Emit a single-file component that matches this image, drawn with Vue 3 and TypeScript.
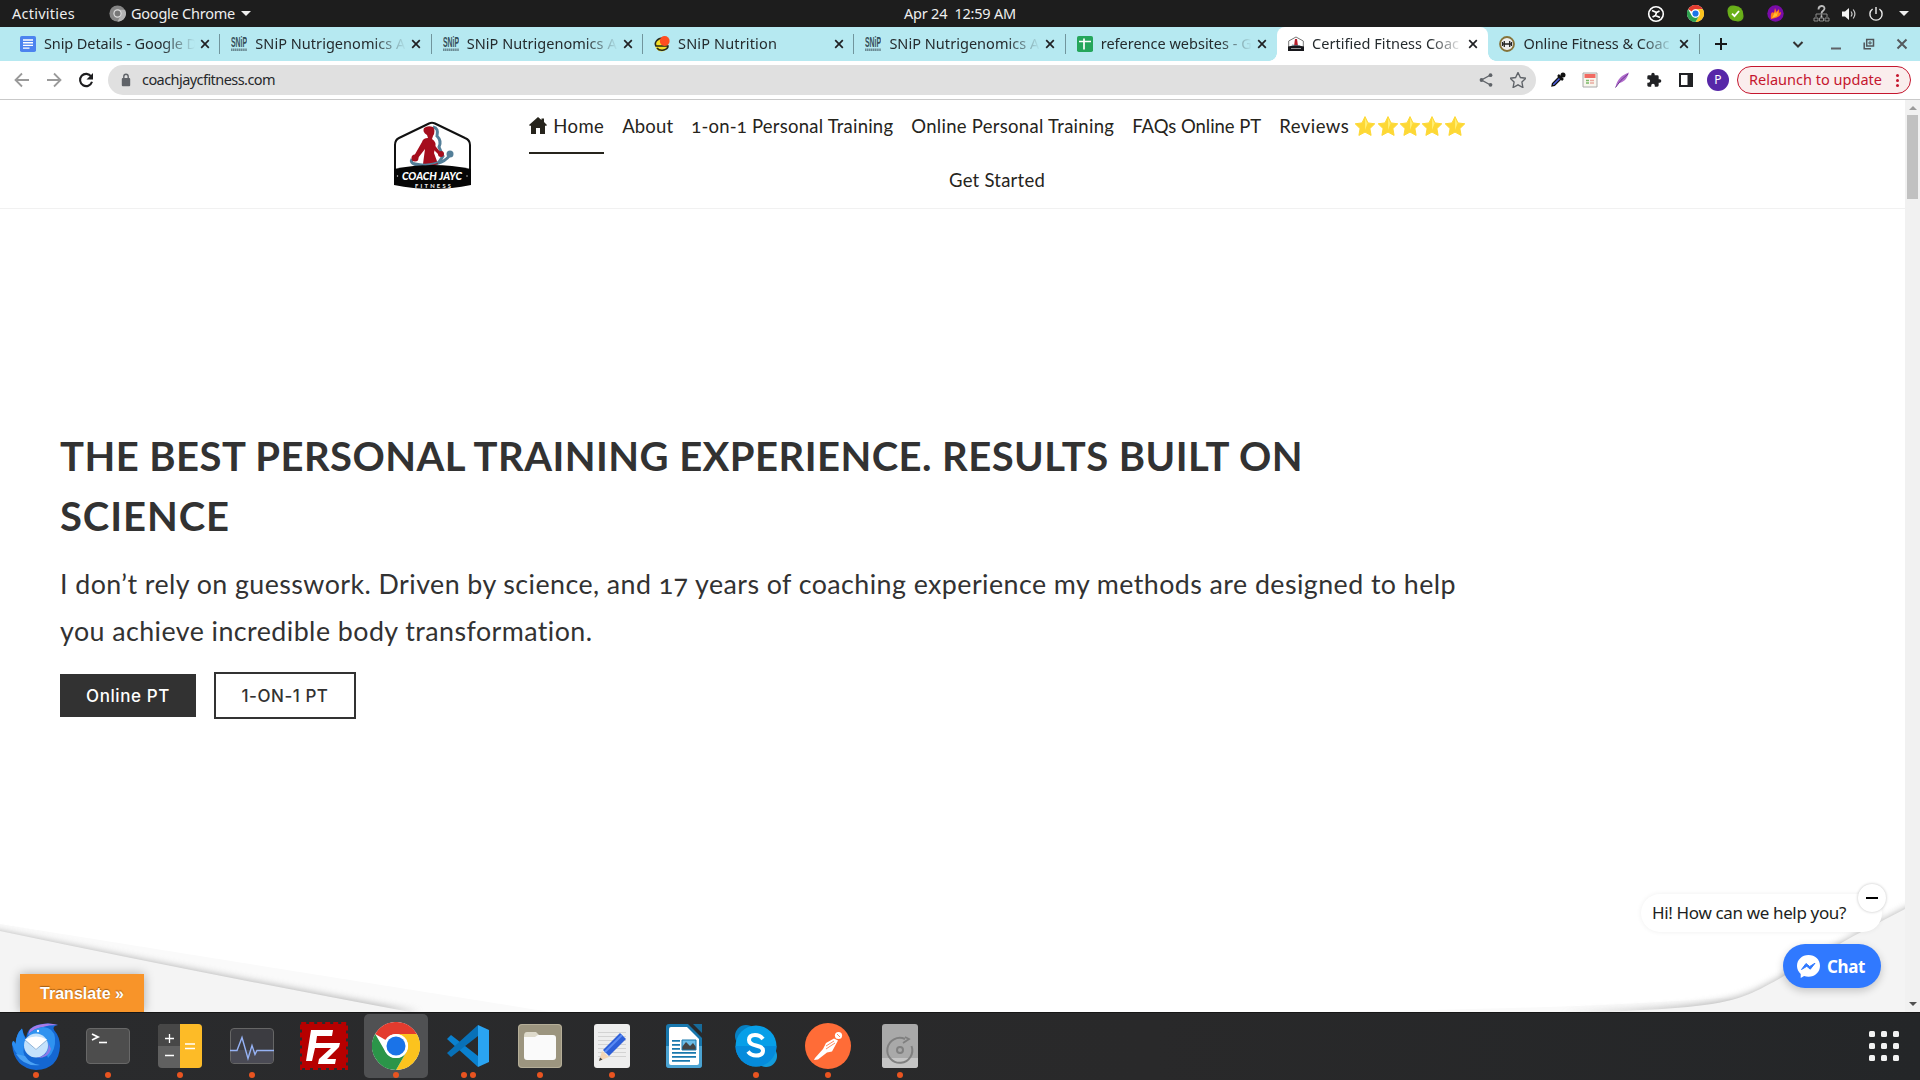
<script setup lang="ts">
interface Tab { title: string; icon: string; width: number; active?: boolean; sep?: boolean }
interface DockApp { id: string; dots: number; active?: boolean }

const tabs: Tab[] = [
  { title: 'Snip Details - Google D', icon: 'docs', width: 153, sep: true },
  { title: 'SNiP Nutrigenomics A', icon: 'snip', width: 150, sep: true },
  { title: 'SNiP Nutrigenomics A', icon: 'snip', width: 150, sep: true },
  { title: 'SNiP Nutrition', icon: 'nutrition', width: 99, sep: true },
  { title: 'SNiP Nutrigenomics A', icon: 'snip', width: 150, sep: true },
  { title: 'reference websites - G', icon: 'sheets', width: 151 },
  { title: 'Certified Fitness Coac', icon: 'coach', width: 147, active: true },
  { title: 'Online Fitness & Coac', icon: 'bell', width: 146, sep: true },
]

const apps: DockApp[] = [
  { id: 'mail', dots: 1 }, { id: 'terminal', dots: 1 }, { id: 'calc', dots: 1 },
  { id: 'monitor', dots: 1 }, { id: 'filezilla', dots: 0 }, { id: 'chrome', dots: 1, active: true },
  { id: 'vscode', dots: 2 }, { id: 'files', dots: 1 }, { id: 'editor', dots: 1 },
  { id: 'writer', dots: 0 }, { id: 'skype', dots: 1 }, { id: 'postman', dots: 1 }, { id: 'disk', dots: 1 },
]

const starPoints = '10,0.6 13,6.9 19.8,7.8 14.9,12.6 16.1,19.4 10,16.1 3.9,19.4 5.1,12.6 0.2,7.8 7,6.9'

// Spreads a line of text over the given width in pixels.
const vFit = {
  mounted(el: HTMLElement, binding: { value: number }) {
    const range = document.createRange()
    range.selectNodeContents(el)
    const natural = range.getBoundingClientRect().width
    const count = (el.textContent ?? '').length
    el.style.letterSpacing = `${(binding.value - natural) / count}px`
  },
}
</script>

<template>
  <div class="desktop">
    <header class="topbar">
      <div class="top-left">
        <span v-fit="63" class="activities">Activities</span>
        <svg width="17" height="17" viewBox="0 0 18 18"><circle cx="9" cy="9" r="8.6" fill="#858585" /><path d="M9 5H17A8.6 8.6 0 0 1 9 17.6L12.500 11" fill="#b5b5b5" /><circle cx="9" cy="9" r="4.4" fill="#ddd" /><circle cx="9" cy="9" r="3.1" fill="#777" /></svg>
        <span v-fit="104" class="app-name">Google Chrome</span>
        <i class="caret"></i>
      </div>
      <div class="clock"><span v-fit="112">Apr 24&nbsp; 12:59 AM</span></div>
      <div class="tray">
        <svg class="t1" width="18" height="18" viewBox="0 0 18 18" fill="none" stroke="#fff"><circle cx="9" cy="9" r="7.300" stroke-width="1.600" /><path d="M5 5.500L9.500 7.500 8.500 10.500 13 12.500M9.500 7.500L12.500 6M8.500 10.500L5.500 12" stroke-width="1.700" /></svg>
        <svg width="17" height="17" viewBox="0 0 48 48"><circle cx="24" cy="24" r="24" fill="#fff" /><path d="M3.200 12A24 24 0 0 1 44.800 12H24A12 12 0 0 0 13.600 18z" fill="#e33b2e" /><path d="M44.800 12A24 24 0 0 1 24 48L34.400 30A12 12 0 0 0 24 12z" fill="#fcc31e" /><path d="M24 48A24 24 0 0 1 3.200 12L13.600 30A12 12 0 0 0 34.400 30z" fill="#2da04e" /><circle cx="24" cy="24" r="11" fill="#fff" /><circle cx="24" cy="24" r="8.700" fill="#1a73e8" /></svg>
        <svg width="17" height="17" viewBox="0 0 17 17"><rect x=".5" y=".5" width="11" height="11" rx="5" fill="#64a91b" /><rect x="5.500" y="5.500" width="11" height="11" rx="5" fill="#64a91b" /><circle cx="8.500" cy="8.500" r="7.600" fill="#6ab019" /><path d="M5 8.700l2.500 2.500L12 6" stroke="#fff" stroke-width="1.800" fill="none" /></svg>
        <svg width="17" height="17" viewBox="0 0 17 17"><circle cx="8.500" cy="8.500" r="8.200" fill="#7a0ba8" /><path d="M4 14C3 9 5 6 7 8L8 3l1.500 4L12 4l.3 4 1.700-1c0 4-3 6-10 7z" fill="#ff7a1c" /><path d="M5 13l3-6 1 2 2-3-1 5z" fill="#ffc22e" /></svg>
        <svg class="net" width="17" height="19" viewBox="0 0 17 19" fill="none" stroke="#8d8d8d"><path d="M3 13V10H14V13M8.500 10V13M1 14h4v3H1zM6.500 14h4v3h-4zM12 14h4v3h-4z" /><path d="M5.500 5.500C5.500 1 11.500 1 11.500 4.500 11.500 7 8.500 6.500 8.500 9.500M8.500 11.500v2" stroke="#bbb" stroke-width="1.800" /></svg>
        <svg class="vol" width="16" height="16" viewBox="0 0 16 16"><path d="M1 5.500h3L8 2v12L4 10.500H1z" fill="#f4f4f4" /><path d="M10 5.500q2 2.500 0 5M12.200 3.500q3.400 4.500 0 9" stroke="#ccc" fill="none" stroke-width="1.200" /></svg>
        <svg class="pow" width="16" height="16" viewBox="0 0 16 16" fill="none" stroke="#eee" stroke-width="1.400"><path d="M8 1v7M4.600 3A6.100 6.100 0 1 0 11.400 3" /></svg>
        <i class="caret"></i>
      </div>
    </header>

    <div class="tabstrip">
      <div v-for="(tab, i) in tabs" :key="i" class="tab" :class="{ active: tab.active, sep: tab.sep }">
        <svg v-if="tab.icon === 'docs'" width="16" height="16" viewBox="0 0 16 16"><rect width="16" height="16" rx="1.800" fill="#4c83ef" /><path d="M3 4h10M3 6.700h10M3 9.400h10M3 12.100h6.500" stroke="#fff" stroke-width="1.400" /></svg>
        <svg v-else-if="tab.icon === 'snip'" width="16" height="16" viewBox="0 0 16 16"><text x="0" y="11" font-family="Liberation Sans, sans-serif" font-size="15" font-weight="700" fill="#35505a" textLength="16" lengthAdjust="spacingAndGlyphs">SNiP</text><path d="M0 13.700H16" stroke="#6b8b94" stroke-width="2.600" stroke-dasharray="1.500 .4" /></svg>
        <svg v-else-if="tab.icon === 'nutrition'" width="16" height="16" viewBox="0 0 16 16"><circle cx="7.500" cy="9" r="6.500" fill="#f3df29" /><path d="M9 2C3 2 0 7 2 10h12c0 4-8 6-11 2" fill="none" stroke="#29291d" stroke-width="1.600" /><circle cx="10.700" cy="5" r="4.900" fill="#ff4d21" /></svg>
        <svg v-else-if="tab.icon === 'sheets'" width="16" height="16" viewBox="0 0 16 16"><rect width="16" height="16" rx="1.800" fill="#25a65b" /><path d="M2 5.500h12M7 2.500V13.500" stroke="#fff" stroke-width="1.700" /></svg>
        <svg v-else-if="tab.icon === 'coach'" width="16" height="16" viewBox="0 0 16 16"><path d="M.7 14V5L8 1l7.300 4v9z" fill="#fff" stroke="#777" /><path d="M6 10l1-7h2l1 7z" fill="#b61f2c" /><path d="M4 9l8 1" stroke="#7795a5" /><path d="M0 10.500q8-2 16 0V15H0z" fill="#17171b" /><path d="M3 12.500h10" stroke="#999" /></svg>
        <svg v-else width="16" height="16" viewBox="0 0 16 16"><circle cx="8" cy="8" r="7" fill="#eee" stroke="#85733a" stroke-width="1.800" /><path d="M3.500 6v4M12.500 6v4M5.300 5v6M10.700 5v6M3 8h10" stroke="#252525" stroke-width="1.300" /></svg>
        <div class="tab-title"><span v-fit="tab.width">{{ tab.title }}</span></div>
        <svg class="close" width="10" height="10" viewBox="0 0 10 10"><path d="M1.200 1.200l7.600 7.600M8.800 1.200L1.200 8.800" stroke="#202124" stroke-width="1.700" /></svg>
      </div>
      <svg class="newtab" width="14" height="14" viewBox="0 0 14 14"><path d="M7 1v12M1 7h12" stroke="#17191b" stroke-width="2" /></svg>
      <div class="winctl">
        <svg width="12" height="12" viewBox="0 0 12 12"><path d="M1.500 4L6 8.500 10.500 4" fill="none" stroke="#333" stroke-width="2" /></svg>
        <svg width="12" height="12" viewBox="0 0 12 12"><path d="M1 10.500h10" stroke="#5f6368" stroke-width="2" /></svg>
        <svg width="12" height="12" viewBox="0 0 12 12" fill="none" stroke="#50565a" stroke-width="1.500"><path d="M3.700 1.500H10.500V8H3.700zM1.200 4.500V10.800H8" /><path d="M6 4h2v1.800H6z" stroke-width="1" /></svg>
        <svg width="12" height="12" viewBox="0 0 12 12"><path d="M1.500 1.500l9 9M10.500 1.500l-9 9" stroke="#555a5e" stroke-width="2" /></svg>
      </div>
    </div>

    <div class="toolbar">
      <svg class="nav-ic" width="16" height="16" viewBox="0 0 16 16" fill="none" stroke="#9a9a9a" stroke-width="1.800"><path d="M15 8H2M8 1.500L1.500 8 8 14.500" /></svg>
      <svg class="nav-ic" width="16" height="16" viewBox="0 0 16 16" fill="none" stroke="#9a9a9a" stroke-width="1.800"><path d="M1 8h13M8 1.500L14.500 8 8 14.500" /></svg>
      <svg class="nav-ic" width="16" height="16" viewBox="0 0 16 16"><path d="M13.200 4.500A6.100 6.100 0 1 0 14 9.800" fill="none" stroke="#1d1d1f" stroke-width="2.100" /><path d="M15 1v6.500H8.500z" fill="#1d1d1f" /></svg>
      <div class="omnibox">
        <svg width="10" height="14" viewBox="0 0 10 14"><rect x=".8" y="5" width="8.400" height="8.300" rx="1" fill="#5f6368" /><path d="M2.800 5.500V3.500a2.200 2.200 0 0 1 4.400 0v2" stroke="#5f6368" stroke-width="1.400" fill="none" /></svg>
        <span v-fit="133" class="url">coachjaycfitness.com</span>
        <svg class="share" width="14" height="14" viewBox="0 0 14 14" fill="#5f6368"><path d="M11.500 2L2.500 7l9 5" fill="none" stroke="#5f6368" stroke-width="1.400" /><circle cx="11.500" cy="2.200" r="1.900" /><circle cx="2.500" cy="7" r="1.900" /><circle cx="11.500" cy="11.800" r="1.900" /></svg>
        <svg width="16" height="16" viewBox="0 0 20 20"><polygon :points="starPoints" fill="none" stroke="#5f6368" stroke-width="1.700" /></svg>
      </div>
      <div class="extensions">
        <svg width="16" height="16" viewBox="0 0 16 16"><path d="M2 14l.5-2.500L9 5l2 2-6.500 6.500z" fill="#4b5ee0" stroke="#111" stroke-width="1.300" /><path d="M8 3l5 5M10.500 5.500L13 3" stroke="#111" stroke-width="2.500" /><circle cx="13" cy="3" r="2.500" fill="#111" /></svg>
        <svg width="16" height="16" viewBox="0 0 16 16"><path d="M1 1h14v14H1z" fill="#f8f6ee" stroke="#aaa" /><path d="M2.500 2h11v4h-11z" fill="#f16a62" /><path d="M4 8.500h3M4 11h3" stroke="#79b967" stroke-width="1.500" /><path d="M8 8.500h4M8 11h4" stroke="#e9aaa0" stroke-width="1.500" /></svg>
        <svg width="16" height="16" viewBox="0 0 16 16"><path d="M1.500 15.500C3 7 8 3 15 .5 13 7 10 10 4.500 11.500z" fill="#b06bcc" /><path d="M1.500 15.500Q6 8 14 2" stroke="#6d3890" fill="none" /></svg>
        <svg width="16" height="16" viewBox="0 0 24 24"><path d="M20.500 11H19V7a2 2 0 0 0-2-2h-4V3.500a2.500 2.500 0 0 0-5 0V5H4a2 2 0 0 0-2 2v3.800h1.500a2.700 2.700 0 0 1 0 5.400H2V20c0 1.100.9 2 2 2h3.800v-1.500a2.700 2.700 0 0 1 5.400 0V22H17a2 2 0 0 0 2-2v-4h1.500a2.500 2.500 0 0 0 0-5z" fill="#202124" /></svg>
        <svg width="16" height="16" viewBox="0 0 16 16"><path d="M2 2h12v12H2z" fill="none" stroke="#202124" stroke-width="2" /><path d="M9.500 1h5.500v14H9.500z" fill="#202124" /></svg>
        <span class="avatar">P</span>
      </div>
      <div class="relaunch"><span v-fit="133">Relaunch to update</span><i class="kebab"></i></div>
    </div>

    <div class="viewport">
      <main class="page">
        <header class="site-head">
          <svg class="logo" width="80" height="70" viewBox="0 0 80 70">
            <path d="M2 56V24Q2 19 6 17L36 2.500Q39 1 42 2.500L72 17Q77 19 77 24V56" fill="#fff" stroke="#111" stroke-width="2" />
            <path d="M40 6q6 1 4 9 5 5 2 11l4 9-4 6M19 38c-6 10 33 9 38-5" fill="none" stroke="#547f99" stroke-width="3" />
            <circle cx="57" cy="33" r="3.500" fill="#547f99" />
            <path d="M31 7q4-3 9-1 3 4 0 9l-1 3q5 3 3 9l-1 5 4 11q-7 3-15 0l2-15-7 9-4-2 8-14q1-4 6-4l-1-3q-5-3-3-7z" fill="#a50d1d" />
            <path d="M39 21l9 11-2 2-8-8z" fill="#a50d1d" /><circle cx="22" cy="37" r="3.500" fill="#a50d1d" /><circle cx="48" cy="33" r="3" fill="#a50d1d" />
            <path d="M1 48Q40 40 78 48V64Q40 72 1 64z" fill="#060606" />
            <path d="M21 42q16 4 28-3" fill="none" stroke="#547f99" stroke-width="1.500" />
            <text x="9" y="59" font-family="Lato, sans-serif" font-size="12" font-weight="900" font-style="italic" fill="#fff" textLength="60" lengthAdjust="spacingAndGlyphs">COACH JAYC</text>
            <text x="22" y="66.500" font-family="Lato, sans-serif" font-size="5.800" font-weight="900" fill="#eee" textLength="36">FITNESS</text>
            <circle cx="4.500" cy="55" r=".7" fill="#ddd" /><circle cx="74" cy="55" r=".7" fill="#ddd" />
          </svg>
          <nav class="menu">
            <div class="menu-row">
              <a class="item current">
                <svg width="18" height="17" viewBox="0 0 18 17"><path d="M9 0l3.500 3V1.500H15V5l3 3-1 1-1-.5V17h-5v-6H7v6H2V8.500L1 9 0 8z" fill="#26241c" /></svg>
                <span v-fit="51">Home</span>
              </a>
              <a class="item"><span v-fit="51">About</span></a>
              <a class="item"><span v-fit="202">1-on-1 Personal Training</span></a>
              <a class="item"><span v-fit="203">Online Personal Training</span></a>
              <a class="item"><span v-fit="129">FAQs Online PT</span></a>
              <a class="item reviews"><span v-fit="70">Reviews</span>
                <span class="stars"><svg v-for="n in 5" :key="n" width="20" height="20" viewBox="0 0 20 20"><polygon :points="starPoints" fill="#fdd835" stroke="#fdd835" stroke-linejoin="round" /><path d="M10 2l2.500 5.500L10 14z" fill="#ffee72" /></svg></span>
              </a>
            </div>
            <div class="menu-row"><a class="item"><span v-fit="96">Get Started</span></a></div>
          </nav>
        </header>

        <section class="hero">
          <h1><span v-fit="1243">THE BEST PERSONAL TRAINING EXPERIENCE. RESULTS BUILT ON</span><br><span v-fit="170">SCIENCE</span></h1>
          <p><span v-fit="1396">I don’t rely on guesswork. Driven by science, and 17 years of coaching experience my methods are designed to help</span><br><span v-fit="533">you achieve incredible body transformation.</span></p>
          <div class="actions">
            <a class="btn solid"><span v-fit="84">Online PT</span></a>
            <a class="btn outline"><span v-fit="87">1-ON-1 PT</span></a>
          </div>
        </section>

        <svg class="waves" width="1905" height="112" viewBox="0 0 1905 112">
          <defs><filter id="soft" x="-5%" y="-30%" width="110%" height="160%"><feGaussianBlur stdDeviation="3.500" /></filter></defs>
          <path d="M0 24L550 112H0zM1320 112Q1600 108 1720 98L1850 112z" fill="#fafafa" />
          <path d="M-20 27Q220 76 420 112H-20z" fill="#8a8a8a" opacity=".6" filter="url(#soft)" />
          <path d="M0 31Q200 73 410 112H0z" fill="#f4f4f4" />
          <path d="M1560 113C1660 109 1710 106 1744 95C1775 84 1810 56 1925 -2V113z" fill="#8a8a8a" opacity=".6" filter="url(#soft)" />
          <path d="M1600 112C1670 109 1715 107 1744 96C1775 85 1810 57 1905 9V112z" fill="#f4f4f4" />
        </svg>

        <div class="translate"><span v-fit="84">Translate »</span></div>
        <div class="bubble"><span v-fit="194">Hi! How can we help you?</span><i class="minimise"></i></div>
        <div class="chat">
          <svg width="23" height="23" viewBox="0 0 23 23"><path d="M11.500 0C5 0 0 4.700 0 11c0 3.300 1.500 6 3.700 8v4l3.400-1.900c1.300.5 2.800.7 4.400.7 6.500 0 11.500-4.700 11.500-11S18 0 11.500 0z" fill="#fff" /><path d="M4.500 14.500l4.500-6 3.700 3 5.300-3.300-4.700 6-3.500-2.900z" fill="#3079ff" stroke="#3079ff" stroke-linejoin="round" /></svg>
          <span v-fit="38">Chat</span>
        </div>
      </main>
      <div class="scrollbar"><i class="up"></i><i class="thumb"></i><i class="down"></i></div>
    </div>

    <footer class="dock">
      <div v-for="app in apps" :key="app.id" class="app" :class="{ active: app.active }">
        <svg width="48" height="48" viewBox="0 0 48 48">
          <template v-if="app.id === 'mail'">
            <path d="M0 22Q1 16 3.500 22 4 12 10 6.500 11 12 14 16 15 6 25 3 36 0 46 3 40 4 42 8 48 15 48 24 47 47 24 48 2 46 0 22z" fill="#1467d2" />
            <path d="M0 22Q1 16 3.500 22 4 12 10 6.500 11 13 14 18 8 30 16 40 4 36 0 22z" fill="#2b8df0" />
            <path d="M16 13Q17 5 26 3 36 0 46 3 36 3 31 5 22 6 16 13z" fill="#a67be8" />
            <path d="M16 13Q22 6 31 5 42 6 43 16 44 28 36 36L28 14z" fill="#2f93f0" />
            <circle cx="24" cy="23.500" r="12" fill="#c4e2fb" /><path d="M13 17.500q11-6 22 0L24 28z" fill="#fff" /><path d="M13 18l11 9.500 11-9.500" fill="none" stroke="#93b5d8" />
            <path d="M4 32q8 13 24 11-10-1-15-9z" fill="#4aa2f5" /><path d="M36 20q3 12-11 16 12 0 14-9z" fill="#8c7be6" /><circle cx="26" cy="9" r="1.200" fill="#fff" />
          </template>
          <template v-else-if="app.id === 'terminal'">
            <rect x="2.500" y="6.500" width="43" height="35" rx="3.500" fill="#4d4d4d" stroke="#686868" /><path d="M8 12l6 3-6 3" fill="none" stroke="#fff" stroke-width="1.800" /><path d="M15 20.500h8" stroke="#fff" stroke-width="1.600" />
          </template>
          <template v-else-if="app.id === 'calc'">
            <rect x="2" y="2" width="44" height="44" rx="4" fill="#606060" /><path d="M24 2H6a4 4 0 0 0-4 4v18h22z" fill="#474747" /><path d="M24 2h18a4 4 0 0 1 4 4v36a4 4 0 0 1-4 4H24z" fill="#fdbb27" /><path d="M9 16.500h9M13.500 12v9M9 33.500h9M29 22h10M29 26.500h10" stroke="#fff" stroke-width="1.300" />
          </template>
          <template v-else-if="app.id === 'monitor'">
            <rect x="2.500" y="6.500" width="43" height="35" rx="3.500" fill="#3c3c41" stroke="#666" /><path d="M3 28h42v10q0 3-3 3H6q-3 0-3-3z" fill="#4a4a54" /><path d="M2 28.500h7l5-13 6 21 4-13 3 9 2-4h17" fill="none" stroke="#96b2f4" stroke-width="1.400" />
          </template>
          <template v-else-if="app.id === 'filezilla'">
            <rect x="2" y="2" width="44" height="44" fill="#b60000" /><rect x="1.200" y="1.200" width="45.600" height="45.600" fill="none" stroke="#b60000" stroke-width="2.400" stroke-dasharray="5 3" />
            <path d="M11 8h22l-1 6H17l-1 7h10l-1 5H15l-3 13H6z" fill="#fff" /><path d="M23 21h17l-1 4-12 12h9l-1 5H18l1-5 12-11h-9z" fill="#fff" />
          </template>
          <template v-else-if="app.id === 'chrome'">
            <circle cx="24" cy="24" r="24" fill="#fff" /><path d="M3.200 12A24 24 0 0 1 44.800 12H24A12 12 0 0 0 13.600 18z" fill="#e33b2e" /><path d="M44.800 12A24 24 0 0 1 24 48L34.400 30A12 12 0 0 0 24 12z" fill="#fcc31e" /><path d="M24 48A24 24 0 0 1 3.200 12L13.600 30A12 12 0 0 0 34.400 30z" fill="#2b9549" /><circle cx="24" cy="24" r="12" fill="#fff" /><circle cx="24" cy="24" r="9.500" fill="#1a73e8" />
          </template>
          <template v-else-if="app.id === 'vscode'">
            <path d="M3 17l4-4L34 34v11z" fill="#0a81cf" /><path d="M3 31l4 4L34 14V3z" fill="#0871b8" /><path d="M34 3l11 5v32l-11 5z" fill="#2aa4f2" />
          </template>
          <template v-else-if="app.id === 'files'">
            <rect x="2" y="2" width="44" height="44" rx="4" fill="#9c957f" /><rect x="2.500" y="2.500" width="43" height="43" rx="3.500" fill="none" stroke="#b5ae98" /><path d="M8 14q0-4 3-4h9l4 4v8H8z" fill="#dedacb" /><path d="M8 15h11l3-2h15q3 0 3 3v19q0 3-3 3H11q-3 0-3-3z" fill="#fafafa" />
          </template>
          <template v-else-if="app.id === 'editor'">
            <rect x="6" y="2" width="36" height="44" rx="3" fill="#eee" /><path d="M10 10.500h28M10 14.500h28M10 18.500h28M10 22.500h28M10 26.500h28M10 30.500h28M10 34.500h28" stroke="#ccc" stroke-width=".8" /><path d="M11 39l3-10 7 6z" fill="#f4d5b5" /><path d="M11 39l1-3.500 2.500 2z" fill="#444" /><path d="M15 28l17-17 6 6-17 17z" fill="#2e5fd8" /><path d="M17 30l17-17" stroke="#5a89f3" stroke-width="2" />
          </template>
          <template v-else-if="app.id === 'writer'">
            <path d="M9 2h19l14 14v27a3 3 0 0 1-3 3H9a3 3 0 0 1-3-3V5a3 3 0 0 1 3-3z" fill="#1877ad" /><path d="M6 24h36v19a3 3 0 0 1-3 3H9a3 3 0 0 1-3-3z" fill="#4ba3d2" /><path d="M11 5h16l12 12v24a2 2 0 0 1-2 2H11a2 2 0 0 1-2-2V7a2 2 0 0 1 2-2z" fill="#fff" /><path d="M33 2h9v9z" fill="#176b9a" /><path d="M12 18.800h8M12 22.800h8M12 26.800h8M12 30.800h24M12 34.800h24M12 38.800h18" stroke="#1878ad" stroke-width="1.800" /><path d="M22 18h14v10H22z" fill="#6cbde7" /><path d="M22 28v-3l4-5 4 4 3-3 3 4v3z" fill="#444" /><path d="M22 18h14v10H22z" fill="none" stroke="#1878ad" />
          </template>
          <template v-else-if="app.id === 'skype'">
            <circle cx="14" cy="14" r="11" fill="#087fc1" /><circle cx="34" cy="34" r="11" fill="#139bdb" /><circle cx="24" cy="24" r="20.500" fill="#079fe8" /><path d="M3.500 24a20.500 20.500 0 0 0 41 0z" fill="#058bdc" />
            <path d="M31 17q-3-4-8-4-6 0-6 5 0 4 7 5.500 7 1.500 7 5 0 5-7 5-5 0-8-4" fill="none" stroke="#fff" stroke-width="4" />
          </template>
          <template v-else-if="app.id === 'postman'">
            <circle cx="24" cy="24" r="23" fill="#ff6c37" /><circle cx="34.500" cy="13.500" r="3.600" fill="#fff" /><path d="M30 16.500l4 2-6 11-5 1-9 7-4 .5 1-2 8-9 3-6z" fill="#fff" /><path d="M22 24l8-5M22 27l9-6M33 12l3 3" stroke="#ff6c37" stroke-width=".8" />
          </template>
          <template v-else>
            <rect x="6" y="2" width="36" height="44" rx="3" fill="#a9a9a9" /><path d="M6 36h36v7a3 3 0 0 1-3 3H9a3 3 0 0 1-3-3z" fill="#c5c5c5" /><path d="M29 17a12.500 12.500 0 1 0 6.500 7" fill="none" stroke="#808080" stroke-width="2" /><path d="M27 21l6-4-4-2" fill="none" stroke="#808080" stroke-width="1.800" /><circle cx="24" cy="28" r="3" fill="none" stroke="#808080" stroke-width="2" />
          </template>
        </svg>
        <div class="dots"><i v-for="n in app.dots" :key="n"></i></div>
      </div>
      <div class="grid"><i v-for="n in 9" :key="n"></i></div>
    </footer>
  </div>
</template>

<style>
html, body { margin: 0; overflow: hidden; background: #fff; }
</style>

<style scoped>
* { box-sizing: border-box; }
svg { display: block; flex: none; }
span { white-space: nowrap; }
.desktop { width: 1920px; height: 1080px; display: flex; flex-direction: column; overflow: hidden; font-family: "Noto Sans", "Open Sans", sans-serif; font-size: 14.500px; }

.topbar { height: 27px; flex: none; background: #1d1d1d; color: #eee; display: grid; grid-template-columns: 904px 1fr 286px; align-items: center; line-height: 24px; }
.topbar span { padding-bottom: 2px; }
.clock { padding-bottom: 2px; }
.top-left { display: flex; align-items: center; padding-left: 12px; }
.activities { width: 97px; }
.app-name { width: 110px; margin-left: 5px; }
.caret { width: 0; height: 0; border: 5px solid transparent; border-top: 5.500px solid #eee; border-bottom: 0; }
.tray { display: flex; align-items: center; padding-left: 13px; gap: 23px; }
.tray .t1 { margin-right: -1px; }
.net { margin-left: 6px; }
.vol { margin-left: -12px; }
.pow { margin-left: -12px; }
.tray .caret { margin-left: -8px; }

.tabstrip { height: 34px; flex: none; background: #b6e9f1; display: flex; padding-left: 9px; align-items: stretch; }
.tab { width: 211.350px; flex: none; display: flex; align-items: center; padding-left: 11px; position: relative; }
.tab.sep::after { content: ""; position: absolute; right: 0; top: 7px; width: 1px; height: 20px; background: #71959d; }
.tab.active { background: #fff; border-radius: 8px 8px 0 0; }
.tab.active::before, .tab.active::after { content: ""; position: absolute; bottom: 0; width: 8px; height: 8px; }
.tab.active::before { left: -8px; background: radial-gradient(circle at 0 0, transparent 7.500px, #fff 8px); }
.tab.active::after { right: -8px; background: radial-gradient(circle at 100% 0, transparent 7.500px, #fff 8px); }
.tab-title { width: 151px; margin-left: 8px; padding-bottom: 2px; color: #252b2e; line-height: 24px; -webkit-mask-image: linear-gradient(90deg, #000 118px, transparent 151px); mask-image: linear-gradient(90deg, #000 118px, transparent 151px); }
.close { margin-left: 5px; }
.newtab { align-self: center; margin-left: 14px; }
.winctl { margin-left: auto; display: flex; align-items: center; padding-right: 12px; gap: 21px; }
.winctl svg:first-child { margin-right: 5px; }

.toolbar { height: 39px; flex: none; border-bottom: 1px solid #c9c9c9; display: flex; align-items: center; padding-left: 14px; background: #fff; }
.nav-ic { margin-right: 16px; }
.omnibox { width: 1428px; height: 30px; margin-left: -2px; background: #e0e0e0; border-radius: 15px; display: flex; align-items: center; padding: 0 10px 0 13px; color: #26282b; }
.url { margin-left: 11px; line-height: 24px; padding-bottom: 2px; }
.share { margin-left: auto; margin-right: 17px; }
.extensions { display: flex; align-items: center; margin-left: 14px; gap: 16px; }
.avatar { width: 22px; height: 22px; border-radius: 50%; background: #5727a8; color: #fff; text-align: center; font-size: 12px; line-height: 21px; margin-left: -3px; }
.relaunch { margin-left: 8px; width: 174px; height: 28px; border: 1px solid #c5162e; border-radius: 14px; background: #faeded; color: #c5162e; display: flex; align-items: center; padding-left: 11px; line-height: 24px; }
.relaunch span { padding-bottom: 2px; }
.kebab { width: 3px; height: 3px; border-radius: 50%; background: #c5162e; box-shadow: 0 -5px #c5162e, 0 5px #c5162e; margin-left: auto; margin-right: 11px; }

.viewport { height: 912px; flex: none; display: flex; }
.page { width: 1905px; height: 912px; position: relative; overflow: hidden; background: #fff; color: #323232; }
.site-head { height: 109px; border-bottom: 1px solid #f1f1f1; display: flex; padding-left: 393px; font-family: Lato, sans-serif; font-size: 18.500px; color: #26241c; }
.logo { margin-top: 21px; }
.menu { width: 936px; margin-left: 56px; }
.menu-row { display: flex; justify-content: center; gap: 18px; }
.item { height: 54px; line-height: 52px; display: flex; align-items: flex-start; font-variant-numeric: oldstyle-nums; font-weight: 400; }
.current { border-bottom: 2px solid #26241c; }
.current svg { margin: 17px 6px 0 0; }
.stars { display: flex; gap: 2.400px; margin: 16px 0 0 6px; }

.hero { padding: 217px 60px 0; }
h1 { margin: 0; font: 700 40px/60px Lato, sans-serif; }
p { margin: 15px 0 0; font: 400 26.800px/47px Lato, sans-serif; font-variant-numeric: oldstyle-nums; }
.actions { display: flex; align-items: center; gap: 18px; margin-top: 17px; font: 500 17px Inter, sans-serif; }
.btn { display: flex; align-items: center; justify-content: center; }
.solid { width: 136px; height: 43px; background: #323232; color: #fff; }
.outline { width: 142px; height: 47px; border: 2px solid #323232; }

.waves { position: absolute; left: 0; bottom: 0; }
.translate { position: absolute; left: 20px; bottom: 0; width: 124px; height: 38px; background: #f89429; color: #fff; font: bold 16px/40px "Liberation Sans", Arial, sans-serif; padding-left: 20px; text-shadow: 0 -1px 1px rgba(80, 40, 0, .5); box-shadow: 0 0 10px rgba(0, 0, 0, .3); }
.bubble { position: absolute; left: 1641px; top: 794px; width: 241px; height: 38px; border-radius: 19px; background: #fff; color: #1c1e21; padding-left: 11px; font-size: 17px; line-height: 38px; box-shadow: 0 0 5px rgba(0, 0, 0, .07); }
.minimise { position: absolute; left: 217px; top: -10px; width: 28px; height: 28px; border-radius: 50%; background: #fff; box-shadow: 0 0 3px rgba(0, 0, 0, .25); }
.minimise::after { content: ""; position: absolute; left: 8px; top: 13px; width: 12px; height: 2px; background: #000; }
.chat { position: absolute; left: 1783px; top: 844px; width: 98px; height: 44px; border-radius: 22px; background: #3079ff; color: #fff; display: flex; align-items: center; padding-left: 14px; gap: 7px; font-size: 17px; font-weight: 700; box-shadow: 0 3px 9px rgba(0, 0, 0, .2); }
.scrollbar { width: 15px; background: #f1f1f1; display: flex; flex-direction: column; align-items: center; }
.scrollbar i { flex: none; }
.up { width: 0; height: 0; border: 4px solid transparent; border-top: 0; border-bottom-color: #9b9b9b; margin-top: 6px; }
.thumb { width: 11px; height: 84px; background: #c1c1c1; margin-top: 5px; }
.down { width: 0; height: 0; border: 4px solid transparent; border-bottom: 0; border-top-color: #505050; margin-top: auto; margin-bottom: 6px; }

.dock { height: 68px; flex: none; background: linear-gradient(90deg, #2a2b2d, #29292a 60%, #242628); border-top: 1px solid #171717; display: flex; padding-left: 4px; gap: 8px; }
.app { width: 64px; height: 64px; margin-top: 1px; border-radius: 5px; display: flex; flex-direction: column; align-items: center; padding-top: 8px; }
.app.active { background: #505153; }
.dots { display: flex; gap: 3px; margin-top: 2px; }
.dots i { width: 6px; height: 6px; border-radius: 50%; background: #e95420; }
.grid { display: grid; grid-template-columns: repeat(3, 6px); grid-auto-rows: 6px; gap: 6px; margin: 18px 21px 0 auto; }
.grid i { background: #f2f2f2; border-radius: 1.500px; }
</style>
